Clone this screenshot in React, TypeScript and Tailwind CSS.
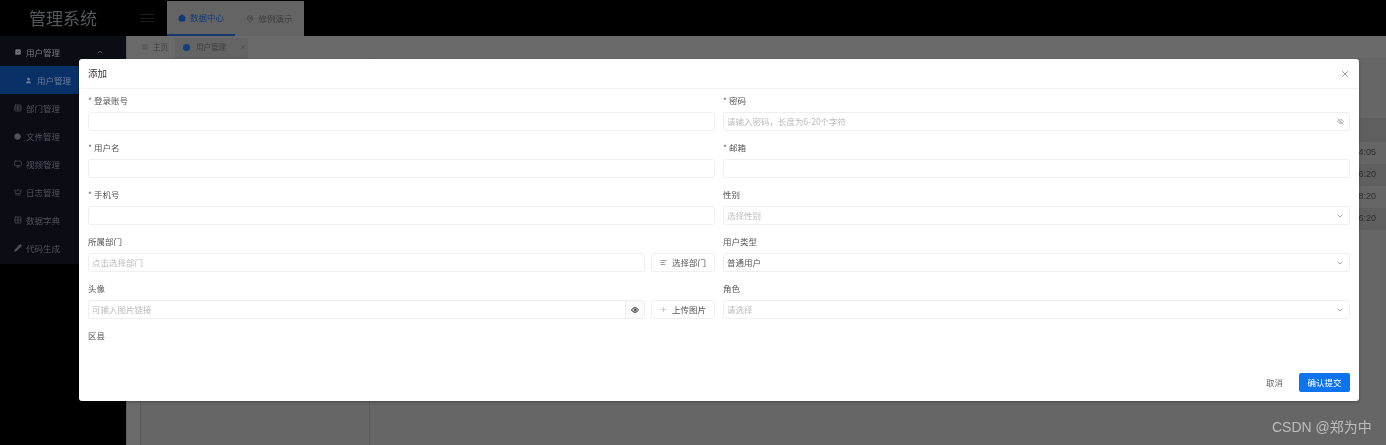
import React from "react";
import { ChevronDown, ChevronUp, Eye, EyeOff, House, SquareCheck, Monitor, User, X, Plus, Pencil, AlignLeft, Table, MapPin, Grid2x2, Crown, Circle } from "lucide-react";

const font = "[font-family:'Noto_Sans_CJK_SC','Liberation_Sans',sans-serif]";

function Label({ text, required }: { text: string; required?: boolean }) {
  return (
    <div className="h-[23px] flex items-center text-[8.5px] text-[#555]">
      {required && <span className="mr-[2px] text-[#777]">*</span>}
      {text}
    </div>
  );
}

function Input({ placeholder, value, chevron, icon }: { placeholder?: string; value?: string; chevron?: boolean; icon?: React.ReactNode }) {
  return (
    <div className="flex-1 h-[19px] border border-[#efefef] rounded-[3px] flex items-center justify-between pl-[3px] pr-[5px] text-[8.5px] bg-white">
      <span className={value ? "text-[#555]" : "text-[#bbb]"}>{value ?? placeholder}</span>
      {chevron && <ChevronDown size={8} className="text-[#777]" />}
      {icon}
    </div>
  );
}

function Field({ label, required, placeholder, value, chevron, icon }: { label: string; required?: boolean; placeholder?: string; value?: string; chevron?: boolean; icon?: React.ReactNode }) {
  return (
    <div className="h-[47px]">
      <Label text={label} required={required} />
      <div className="flex h-[19px]">
        <Input placeholder={placeholder} value={value} chevron={chevron} icon={icon} />
      </div>
    </div>
  );
}

function SideItem({ icon, label, active, open }: { icon: React.ReactNode; label: string; active?: boolean; open?: boolean }) {
  return (
    <div className={`h-[28px] flex items-center text-[8.5px] ${active ? "bg-[#0a3068] pl-[25px] text-[#6b7c97]" : open ? "pl-[14px] text-[#75797f]" : "pl-[14px] text-[#50545b]"}`}>
      <span className="w-[12px] flex items-center">{icon}</span>
      <span>{label}</span>
      {open && <ChevronUp size={8} className="ml-[36px] text-[#777]" />}
    </div>
  );
}

const rows = ["4:05", "6:20", "8:20", "6:20"];

export default function App() {
  return (
    <div className={`relative w-[1386px] h-[445px] overflow-hidden bg-black flex flex-col blur-[0.3px] ${font}`}>
      <header className="h-[36px] shrink-0 flex items-stretch bg-black">
        <div className="w-[126px] flex items-center justify-center text-[17px] tracking-[0px] text-[#55585c]">管理系统</div>
        <div className="w-[41px] flex items-center justify-center">
          <div className="w-[14px] h-[8px] border-y border-[#1c1c1c] flex items-center"><div className="w-full h-px bg-[#1c1c1c]" /></div>
        </div>
        <div className="mt-[1px] w-[137px] bg-[#646464] flex text-[8.5px]">
          <div className="w-[68px] border-b-2 border-[#16386a] flex items-center justify-center gap-[4px] text-[#0e3a78]"><House size={8} fill="#0e3a78" />数据中心</div>
          <div className="flex-1 flex items-center justify-center gap-[4px] text-[#3d3d3d]"><MapPin size={8} />修例演示</div>
        </div>
      </header>
      <div className="flex-1 flex min-h-0">
        <aside className="w-[126px] shrink-0 bg-black">
          <div className="bg-[#0a0d14] pt-[2px] h-[228px]">
            <SideItem open icon={<SquareCheck size={8} fill="#75797f" className="text-[#0a0d14]" />} label="用户管理" />
            <SideItem active icon={<User size={7} fill="#6b7c97" className="text-[#6b7c97]" />} label="用户管理" />
            <SideItem icon={<Table size={8} />} label="部门管理" />
            <SideItem icon={<Circle size={7} fill="#50545b" />} label="文件管理" />
            <SideItem icon={<Monitor size={8} />} label="视频管理" />
            <SideItem icon={<Crown size={8} />} label="日志管理" />
            <SideItem icon={<Grid2x2 size={8} />} label="数据字典" />
            <SideItem icon={<Pencil size={8} fill="#50545b" />} label="代码生成" />
          </div>
        </aside>
        <main className="flex-1 bg-[#666] border-l border-[#5c5c5c] flex flex-col">
          <div className="h-[22px] flex items-end gap-[1px] pl-[9px] bg-[#6a6a6a] text-[7.5px] text-[#3f3f3f]">
            <div className="w-[38px] h-[20px] pb-[2px] flex items-center justify-center gap-[5px]"><span className="w-[6px] h-[6px] bg-[#5d5d5d]" />主页</div>
            <div className="w-[73px] h-[20px] pb-[2px] pl-[8px] flex items-center gap-[6px] bg-[#646464]"><span className="w-[7px] h-[7px] rounded-full bg-[#12407f]" />用户管理<X size={6} className="ml-[8px]" /></div>
          </div>
          <div className="flex-1 flex">
            <div className="w-[14px] border-r border-[#5a5a5a] bg-[#6b6b6b]" />
            <div className="w-[229px] border-r border-[#5c5c5c]" />
            <div className="flex-1 flex flex-col pt-[60px] text-[9px] text-[#2e2e2e] [font-family:'Liberation_Sans',sans-serif]">
              <div className="h-[24px] bg-[#5f5f5f]" />
              {rows.map((t, i) => (
                <div key={i} className={`w-full h-[22px] flex items-center justify-end pr-[10px] ${i % 2 === 1 ? "bg-[#5f5f5f]" : ""}`}>{t}</div>
              ))}
            </div>
          </div>
        </main>
      </div>

      <div className="absolute left-[79px] top-[59px] w-[1280px] h-[342px] bg-white rounded-[3px] shadow-[0_1px_3px_rgba(0,0,0,0.3)] flex flex-col">
        <div className="h-[30px] shrink-0 flex items-center justify-between px-[9px] border-b border-[#f3f3f3] text-[9.5px] text-[#333]">
          添加
          <X size={10} className="text-[#888]" />
        </div>
        <div className="flex-1 grid grid-cols-2 gap-x-[8px] content-start px-[9px]">
          <Field required label="登录账号" />
          <Field required label="密码" placeholder="请输入密码，长度为6-20个字符" icon={<EyeOff size={7} className="text-[#888]" />} />
          <Field required label="用户名" />
          <Field required label="邮箱" />
          <Field required label="手机号" />
          <Field label="性别" placeholder="选择性别" chevron />
          <div className="h-[47px]">
            <Label text="所属部门" />
            <div className="flex gap-[6px] h-[19px]">
              <Input placeholder="点击选择部门" />
              <div className="w-[64px] h-[19px] border border-[#efefef] rounded-[3px] flex items-center justify-center gap-[5px] text-[8.5px] text-[#555]"><AlignLeft size={7} className="text-[#555]" />选择部门</div>
            </div>
          </div>
          <Field label="用户类型" value="普通用户" chevron />
          <div className="h-[47px]">
            <Label text="头像" />
            <div className="flex gap-[6px] h-[19px]">
              <div className="flex-1 h-[19px] border border-[#efefef] rounded-[3px] flex items-center justify-between pl-[3px] text-[8.5px] text-[#bbb]">
                可输入图片链接
                <span className="w-[19px] h-full border-l border-[#efefef] bg-[#fafafa] flex items-center justify-center"><Eye size={8} strokeWidth={3} className="text-[#333]" /></span>
              </div>
              <div className="w-[64px] h-[19px] border border-[#efefef] rounded-[3px] flex items-center justify-center gap-[5px] text-[8.5px] text-[#555]"><Plus size={7} className="text-[#aaa]" />上传图片</div>
            </div>
          </div>
          <Field label="角色" placeholder="请选择" chevron />
          <Label text="区县" />
        </div>
        <div className="h-[25px] mb-[6px] shrink-0 flex items-center justify-end gap-[16px] px-[9px]">
          <span className="text-[8.5px] text-[#666]">取消</span>
          <span className="w-[51px] h-[19px] rounded-[2px] bg-[#0d74ee] text-white text-[8.5px] flex items-center justify-center">确认提交</span>
        </div>
      </div>

      <div className="absolute left-[1272px] top-[417px] text-[14px] text-[#bdbdbd] [font-family:'Liberation_Sans','Noto_Sans_CJK_SC',sans-serif]">CSDN @郑为中</div>
    </div>
  );
}
